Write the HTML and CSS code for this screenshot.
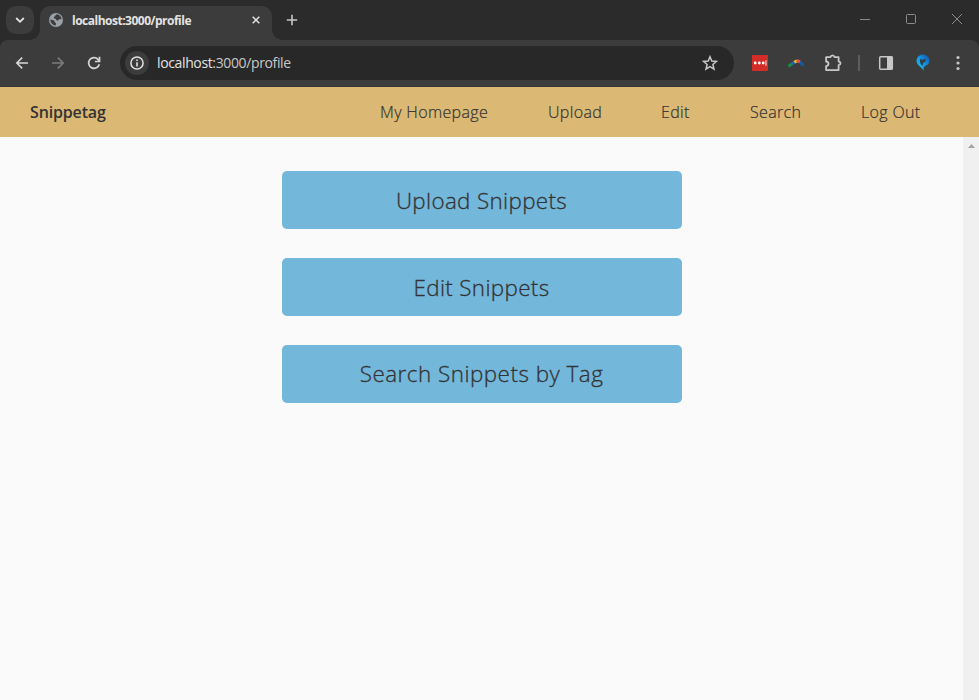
FILE: index.html
```html
<!DOCTYPE html>
<html lang="en">
<head>
<meta charset="utf-8">
<title>localhost:3000/profile</title>
<link rel="stylesheet" href="styles.css">
</head>
<body>
<div class="window">
  <header class="tabstrip">
    <button class="tab-search" aria-label="Search tabs"><svg width="10" height="8" viewBox="0 0 10 8"><path d="M1.2 2 5 5.8 8.800 2" fill="none" stroke="#e3e3e3" stroke-width="1.8"/></svg></button>
    <div class="tab">
      <svg class="globe" width="14" height="14" viewBox="0 0 14 14"><circle cx="7" cy="7" r="7" fill="#9aa0a8"/><path d="M7.800 1.300C6 2 6.400 3.600 4.800 4.200c-.6.9.7 1.100 1.700 1.500.9.600.4 1.600 1.700 1.700 1.600.1 1.600-1.700 3-1.500l1.400.6A5.700 5.700 0 0 0 7.800 1.300ZM1.400 6.400c1.300.6 2.700.2 3.700 1.200.8.900-.1 1.900 1.300 2.200 1 .3.600 1.200.3 2.800A5.700 5.700 0 0 1 1.400 6.400Z" fill="#3c3c3c"/></svg>
      <span class="tab-title">localhost:3000/profile</span>
      <svg class="tab-close" width="8" height="8" viewBox="0 0 8 8"><path d="M.7.7l6.600 6.600M7.300.7.7 7.300" stroke="#e3e3e3" stroke-width="1.500"/></svg>
    </div>
    <svg class="new-tab" width="12" height="12" viewBox="0 0 12 12"><path d="M6 .8v10.400M.8 6h10.400" stroke="#c7c7c7" stroke-width="1.600"/></svg>
    <div class="controls">
      <svg width="10" height="10" viewBox="0 0 10 10"><path d="M0 5.500h10"/></svg>
      <svg width="10" height="10" viewBox="0 0 10 10"><rect x=".5" y=".5" width="9" height="9" rx="1"/></svg>
      <svg width="10" height="10" viewBox="0 0 10 10"><path d="M0 0l10 10M10 0 0 10"/></svg>
    </div>
  </header>
  <div class="toolbar">
    <div class="history">
      <svg width="14" height="14" viewBox="0 0 14 14"><path d="M13 7H2M7.200 1.600 1.800 7l5.400 5.400" fill="none" stroke="#d6d6d6" stroke-width="1.600"/></svg>
      <svg width="14" height="14" viewBox="0 0 14 14"><path d="M1 7h11M6.800 1.600 12.200 7l-5.400 5.400" fill="none" stroke="#7c7c7c" stroke-width="1.600"/></svg>
      <svg width="14" height="14" viewBox="0 0 14 14"><path d="M12.300 8.200A5.400 5.400 0 1 1 11 3.300l1.200 1.300" fill="none" stroke="#d6d6d6" stroke-width="1.700"/><path d="M12.500.8v4.700H7.900" fill="none" stroke="#d6d6d6" stroke-width="1.700"/></svg>
    </div>
    <div class="omnibox">
      <span class="info"><svg width="14" height="14" viewBox="0 0 14 14"><circle cx="7" cy="7" r="6.100" fill="none" stroke="#e3e3e3" stroke-width="1.500"/><path d="M7 6.200v4.300M7 3.500v1.600" stroke="#e3e3e3" stroke-width="1.600"/></svg></span>
      <span class="url">localhost<span class="path">:3000/profile</span></span>
      <svg class="star" width="16" height="16" viewBox="0 0 16 16"><path d="M8 1.700l1.800 4.300 4.700.4-3.600 3.100 1.100 4.600L8 11.600l-4 2.500 1.100-4.600L1.500 6.400l4.700-.4Z" fill="none" stroke="#c7c7c7" stroke-width="1.500"/></svg>
    </div>
    <div class="extensions">
      <svg width="16" height="16" viewBox="0 0 16 16"><rect width="16" height="16" rx="1" fill="#d32d27"/><g fill="#fff"><circle cx="3.200" cy="8" r="1.400"/><circle cx="7.300" cy="8" r="1.400"/><circle cx="11.200" cy="8" r="1.400"/><path d="M13.500 5.200h.9v5.600h-.9z"/></g></svg>
      <svg width="16" height="16" viewBox="0 0 16 16" fill="none" stroke-width="3"><path d="M.5 11.300 4 8.700" stroke="#188c4b"/><path d="M3.400 9.200 7 6.700" stroke="#1769aa"/><path d="M6.400 7.200 9 5.700" stroke="#f6bd35"/><path d="M8.700 5.500 12.200 7" stroke="#e5533d"/><path d="M11.700 7l3.800 3.300" stroke="#125ca6"/></svg>
      <svg width="18" height="18" viewBox="0 0 18 18"><path d="M2.100 3.200H6.500c.4-2.400 3.600-2.400 4 0h4.100v4.300c2.600.4 2.600 3.200 0 3.600v5H2.100v-4c3.200-.2 3.200-4.400 0-4.600Z" fill="none" stroke="#c7c7c7" stroke-width="1.800" stroke-linejoin="round"/></svg>
      <span class="divider"></span>
      <svg width="16" height="16" viewBox="0 0 16 16"><rect x="1.700" y="1.700" width="12.600" height="12.600" rx="1" fill="none" stroke="#c7c7c7" stroke-width="1.500"/><path d="M9 1.500h5.500v13H9z" fill="#c7c7c7"/></svg>
      <svg width="16" height="18" viewBox="0 0 16 18"><defs><linearGradient id="pin" x1="0" y1="1" x2="1" y2="0"><stop stop-color="#17c9f7"/><stop offset=".5" stop-color="#129ae5"/><stop offset="1" stop-color="#1749a2"/></linearGradient></defs><path d="M8.600 17C7 13 1.500 11.700 1.500 6.500A6.500 6 0 0 1 14.500 6.500c0 4-3 4.600-4.600 5.600-1.300.9-1.400 2.400-1.300 4.900Z" fill="url(#pin)"/><path d="M5.800 4.500 7.600 6l2.700-1.500c1 2.300-.2 3.600-2.200 4.600L7.600 12C4.900 9.500 4.200 7 5.800 4.500Z" fill="#343c44"/></svg>
      <svg width="4" height="16" viewBox="0 0 4 16" fill="#c7c7c7"><circle cx="2" cy="2.500" r="1.600"/><circle cx="2" cy="8" r="1.600"/><circle cx="2" cy="13.500" r="1.600"/></svg>
    </div>
  </div>
  <nav class="navbar">
    <a class="brand">Snippetag</a>
    <div class="links"><a class="home">My Homepage</a><a class="upload">Upload</a><a class="edit">Edit</a><a class="search">Search</a><a class="logout">Log Out</a></div>
  </nav>
  <div class="viewport">
    <main class="actions">
      <a class="action action-upload">Upload Snippets</a>
      <a class="action action-edit">Edit Snippets</a>
      <a class="action action-search">Search Snippets by Tag</a>
    </main>
    <div class="scrollbar"><svg width="7" height="4" viewBox="0 0 7 4"><path d="M0 4 3.500 0 7 4Z" fill="#a3a3a3"/></svg></div>
  </div>
</div>
</body>
</html>
```
FILE: styles.css
```css
* { box-sizing: border-box; }
body { margin: 0; background: #fafafa; font-family: "Open Sans", sans-serif; }
svg { display: block; flex: none; }
.window { width: 979px; height: 700px; display: flex; flex-direction: column; overflow: hidden; background: #2b2b2b; }
.tabstrip { height: 40px; flex: none; display: flex; padding-left: 6px; background: #2b2b2b; border-radius: 8px 8px 0 0; }
.tab-search { width: 28px; height: 28px; margin-top: 6px; padding: 0; border: 0; border-radius: 10px; background: #3c3c3c; display: flex; align-items: center; justify-content: center; }
.tab { position: relative; width: 232px; height: 34px; margin: 6px 0 0 6px; padding: 0 12px 6px 9px; border-radius: 10px 10px 0 0; background: #3c3c3c; display: flex; align-items: center; }
.tab::before, .tab::after { content: ""; position: absolute; bottom: 0; width: 10px; height: 10px; }
.tab::before { left: -10px; background: radial-gradient(circle at 0 0, transparent 9.500px, #3c3c3c 10px); }
.tab::after { right: -10px; background: radial-gradient(circle at 100% 0, transparent 9.500px, #3c3c3c 10px); }
.tab-title { margin-left: 9px; padding-top: 2px; font-size: 12px; font-weight: 700; letter-spacing: -.5px; color: #e3e3e3; line-height: 16px; white-space: nowrap; }
.tab-close { margin-left: auto; }
.new-tab { margin: 14px 0 0 14px; }
.controls { margin: 14px 17px 0 auto; display: flex; gap: 36px; height: 10px; }
.controls svg { fill: none; stroke: #8b8b8b; }
.toolbar { height: 47px; flex: none; display: flex; align-items: center; padding: 0 19px 1px 15px; background: #3c3c3c; border-radius: 8px 8px 0 0; border-bottom: 1px solid #353638; }
.history { display: flex; gap: 22px; width: 105px; }
.omnibox { width: 614px; height: 34px; border-radius: 17px; background: #282828; display: flex; align-items: center; padding: 0 16px 0 5px; }
.info { width: 24px; height: 24px; border-radius: 50%; background: #3c3c3c; display: flex; align-items: center; justify-content: center; }
.url { margin-left: 8px; font-size: 14px; letter-spacing: -.37px; color: #e3e3e3; }
.path { color: #c7c7c7; }
.star { margin-left: auto; }
.extensions { margin-left: 18px; display: flex; align-items: center; flex: 1; }
.extensions svg:nth-child(2) { margin-left: 20px; }
.extensions svg:nth-child(3) { margin-left: 20px; }
.divider { width: 2px; height: 16px; margin-left: 16px; background: #5d5d5d; }
.divider + svg { margin-left: 18px; }
.divider + svg + svg { margin-left: 21px; }
.extensions svg:last-child { margin-left: auto; }
.navbar { height: 50px; flex: none; display: flex; align-items: center; padding: 0 58px 0 30px; background: #dbb974; color: #333; font-size: 16px; line-height: 20px; white-space: nowrap; }
.brand { font-weight: 600; letter-spacing: -.15px; }
.links { margin-left: auto; display: flex; gap: 60px; font-weight: 300; -webkit-text-stroke: .2px #333; }
.home { width: 108px; letter-spacing: .35px; }
.upload { width: 53px; letter-spacing: .35px; }
.edit { width: 29px; letter-spacing: .35px; }
.search { width: 51px; letter-spacing: .35px; }
.logout { width: 60px; letter-spacing: .35px; }
.viewport { flex: 1; display: flex; background: #fafafa; }
.actions { flex: 1; display: flex; flex-direction: column; align-items: center; gap: 29px; padding-top: 34px; }
.action { width: 400px; height: 58px; border-radius: 5px; background: #73b7db; color: #333; display: flex; align-items: center; justify-content: center; font-size: 22.400px; font-weight: 300; white-space: nowrap; letter-spacing: .35px; -webkit-text-stroke: .3px #333; }
.action-search { padding-bottom: 1px; letter-spacing: .5px; }
.scrollbar { width: 16px; background: #f0f0f0; display: flex; justify-content: center; padding-top: 7px; }
```
